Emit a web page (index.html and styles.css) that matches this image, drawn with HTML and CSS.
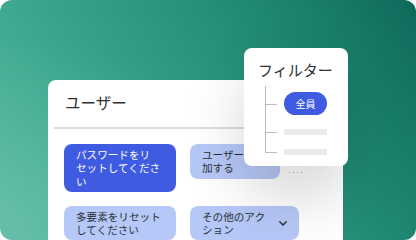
FILE: index.html
```html
<!DOCTYPE html>
<html lang="ja">
<head>
<meta charset="utf-8">
<link rel="stylesheet" href="styles.css">
</head>
<body>
<div class="frame">
  <div class="card">
    <div class="card-header">ユーザー</div>
    <div class="divider"></div>
    <div class="actions">
      <div class="row">
        <div class="btn btn-primary w112">パスワードをリセットしてください</div>
        <div class="btn btn-light w90">ユーザーを追加する</div>
        <div class="more"><i></i><i></i><i></i><i></i></div>
      </div>
      <div class="row">
        <div class="btn btn-light w112">多要素をリセットしてください</div>
        <div class="btn btn-light w109 btn-menu">
          <span class="btn-label">その他のアクション</span>
          <svg class="chev" width="8" height="5" viewBox="0 0 8 5"><path d="M0.8 0.8 L4 4 L7.2 0.8" fill="none" stroke="#2c2f38" stroke-width="1.5" stroke-linecap="round" stroke-linejoin="round"/></svg>
        </div>
      </div>
    </div>
  </div>
  <div class="filter">
    <div class="filter-title">フィルター</div>
    <div class="tree">
      <div class="node"><span class="pill">全員</span></div>
      <div class="node"><span class="bar"></span></div>
      <div class="node"><span class="bar"></span></div>
    </div>
  </div>
</div>
</body>
</html>
```
FILE: styles.css
```css
html, body {
  margin: 0;
  padding: 0;
  background: #ffffff;
}
body {
  font-family: "Noto Sans CJK JP", "Noto Sans", sans-serif;
}
.frame {
  position: relative;
  width: 416px;
  height: 240px;
  box-sizing: border-box;
  padding: 80px 0 0 48px;
  border-radius: 12px;
  overflow: hidden;
  background:
    radial-gradient(ellipse 260px 200px at 0% 100%, rgba(120, 200, 180, 0.45), rgba(120, 200, 180, 0) 100%),
    linear-gradient(58deg, #5ab8a3 0%, #3ca78e 30%, #28937c 58%, #1a7f6b 80%, #10695a 100%);
}
.card {
  width: 295px;
  height: 200px;
  background: #ffffff;
  border-radius: 8px;
}
.card-header {
  padding: 10px 17px 13px;
  font-size: 15.5px;
  line-height: 24px;
  color: #2e2f33;
}
.divider {
  height: 2px;
  margin: 0 6px;
  background: #dcdcdc;
}
.actions {
  display: flex;
  flex-direction: column;
  gap: 14px;
  padding: 15px 16px;
}
.row {
  display: flex;
  align-items: flex-start;
  gap: 14px;
}
.btn {
  box-sizing: border-box;
  padding: 4px 12px;
  border-radius: 8px;
  font-size: 10.6px;
  line-height: 13.3px;
  line-break: strict;
}
.btn-primary {
  background: #3f5be2;
  color: #ffffff;
}
.btn-light {
  background: #b6c8f7;
  color: #2c2f38;
}
.w112 { width: 112px; }
.w90 { width: 90px; }
.w109 { width: 109px; }
.btn-menu {
  display: flex;
  align-items: center;
}
.btn-label {
  flex: 1;
}
.chev {
  margin-left: 8px;
}
.more {
  display: flex;
  gap: 3px;
  margin: 28px 0 0 -5px;
}
.more i {
  width: 1px;
  height: 1px;
  background: #aeb2b6;
}
.filter {
  position: absolute;
  left: 244px;
  top: 48px;
  width: 104px;
  height: 118px;
  box-sizing: border-box;
  padding-top: 11px;
  background: #ffffff;
  border-radius: 8px;
  box-shadow: 0 30px 60px rgba(0, 0, 0, 0.16);
}
.filter-title {
  padding-left: 14px;
  font-size: 15px;
  line-height: 22px;
  color: #2e2f33;
}
.tree {
  position: relative;
  margin: 5px 0 0 21px;
  padding: 6px 0 0 19px;
  display: flex;
  flex-direction: column;
  gap: 14px;
}
.tree::before {
  content: "";
  position: absolute;
  left: 0;
  top: 0;
  bottom: 2px;
  width: 1px;
  background: #bdbdbd;
}
.node {
  position: relative;
  display: flex;
}
.node::before {
  content: "";
  position: absolute;
  left: -19px;
  top: 50%;
  width: 12px;
  height: 1px;
  background: #bdbdbd;
}
.pill {
  width: 43px;
  height: 23px;
  border-radius: 12px;
  background: #3f5be2;
  color: #ffffff;
  font-size: 10px;
  line-height: 23px;
  text-align: center;
}
.bar {
  width: 43px;
  height: 6px;
  border-radius: 1px;
  background: #ebebeb;
}
```
